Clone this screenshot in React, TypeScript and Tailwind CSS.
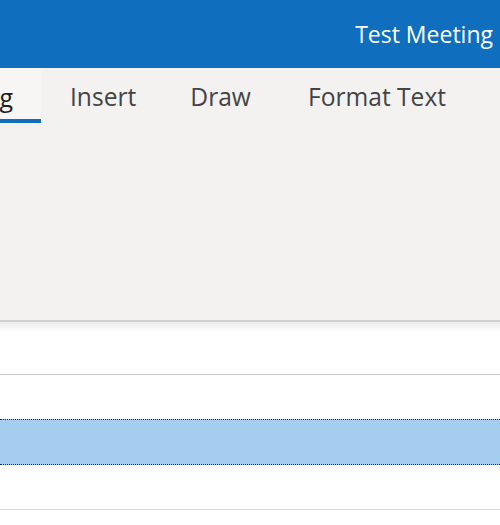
export default function App() {
  const tabs = [
    { label: "Insert", pad: "pl-[29px] pr-[27px]" },
    { label: "Draw", pad: "px-[27px]" },
    { label: "Format Text", pad: "pl-[30px] pr-[27px]" },
  ];

  return (
    <div className="w-[500px] h-[525px] overflow-hidden bg-white font-['Open_Sans',sans-serif]">
      <header className="h-[68px] bg-[#106ebe] flex items-center justify-end pr-[7px]">
        <span className="text-white text-[23px] leading-none pt-[1px]">Test Meeting</span>
      </header>

      <div className="h-[252px] bg-[#f3f2f1] overflow-hidden">
        <nav className="flex h-[56px] items-stretch">
          <div className="relative w-[41px] shrink-0 bg-[#f7f6f5] flex items-center justify-end pr-[28px]">
            <span className="text-[25px] text-[#201f1e] leading-none whitespace-nowrap pt-[3px]">
              Meeting
            </span>
            <span className="absolute left-0 right-0 bottom-[1px] h-[4px] bg-[#106ebe]" />
          </div>
          {tabs.map((t) => (
            <div key={t.label} className={`flex items-center ${t.pad}`}>
              <span className="text-[24.6px] text-[#444444] leading-none whitespace-nowrap pt-[3px]">
                {t.label}
              </span>
            </div>
          ))}
        </nav>
      </div>

      <div className="h-[2px] bg-[#d2d0ce]" />
      <div className="h-[10px] bg-gradient-to-b from-[#ececec] to-white" />

      <div className="h-[43px] border-b border-[#c8c8c8]" />
      <div className="h-[44px]" />
      <div className="h-[46px] bg-[#a4cdef] border-y border-dotted border-[#1f2d3d]" />
      <div className="h-[45px] border-b border-[#dcdcdc]" />
    </div>
  );
}
